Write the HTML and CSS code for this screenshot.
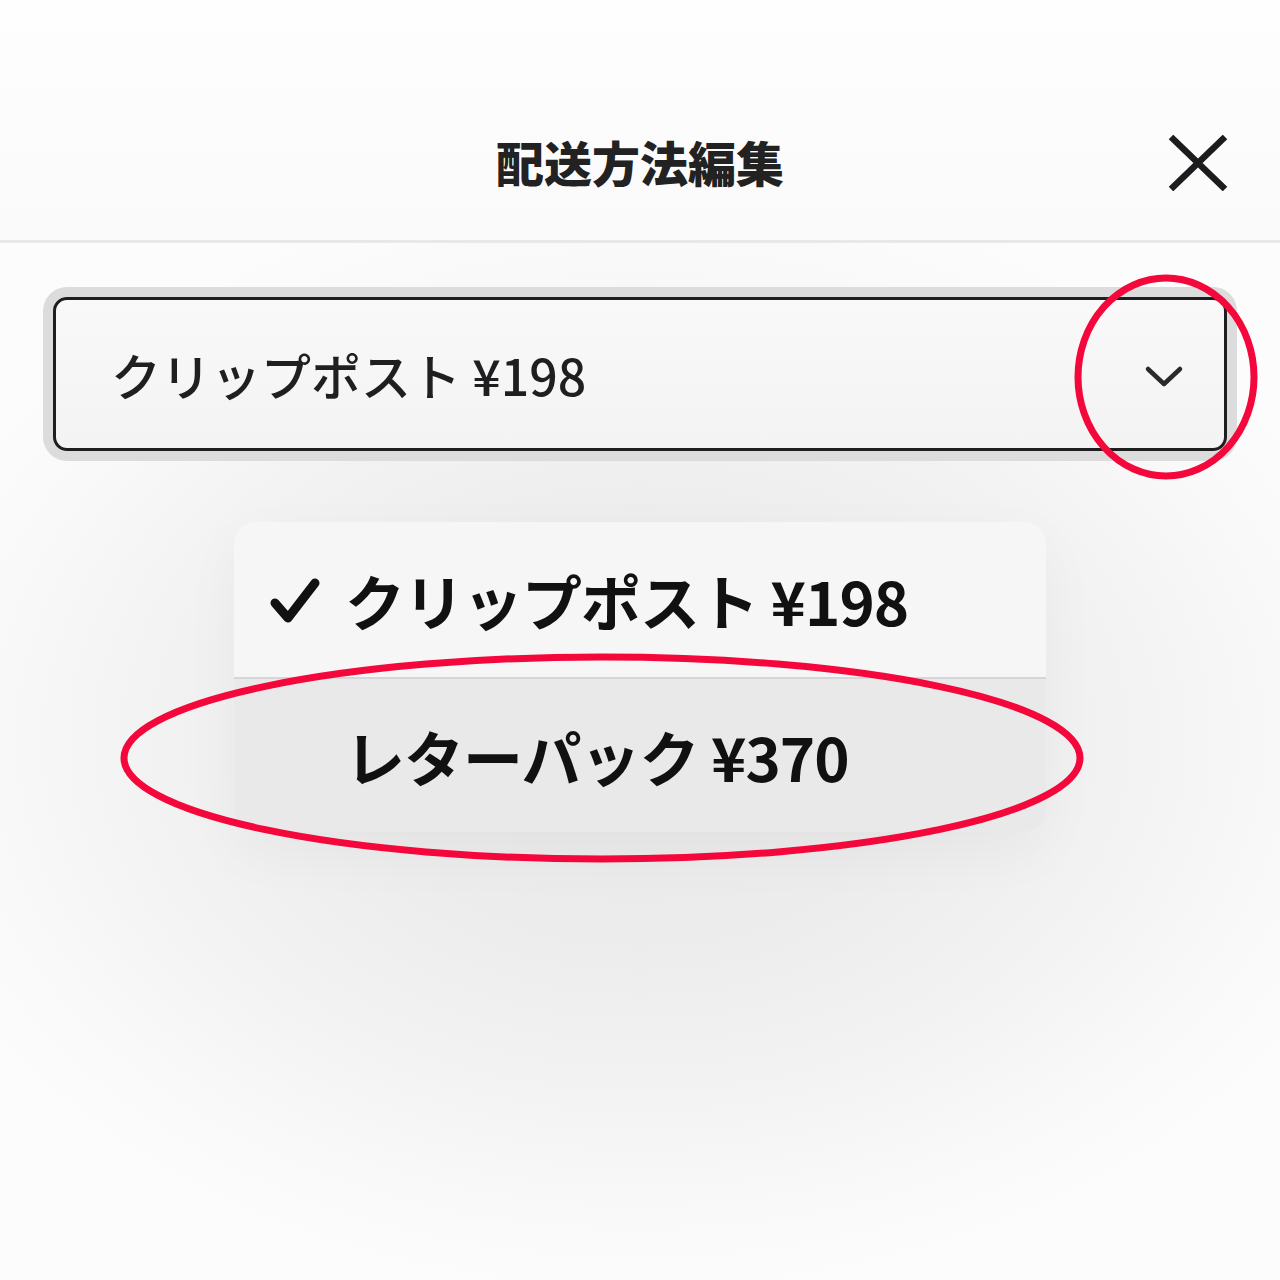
FILE: index.html
```html
<!DOCTYPE html>
<html lang="ja">
<head>
  <meta charset="UTF-8" />
  <meta name="viewport" content="width=device-width, initial-scale=1.0"/>
  <title>配送方法編集</title>
  <link rel="stylesheet" href="styles.css">
</head>
<body>
  <div class="sheet">
    <header class="sheet-header">
      <h1 class="sheet-title">配送方法編集</h1>
      <button class="close-btn" aria-label="閉じる">
        <svg viewBox="0 0 60 56" width="60" height="56">
          <path d="M3 2 L57 54 M57 2 L3 54" stroke="#1c1c1e" stroke-width="6.5" fill="none"/>
        </svg>
      </button>
    </header>

    <div class="field-section">
      <div class="select-box">
        <span class="select-value">クリップポスト ¥198</span>
        <svg class="select-chevron" viewBox="0 0 40 24" width="40" height="24">
          <path d="M4 5 L20 20 L36 5" stroke="#2a2a2c" stroke-width="4.5" fill="none" stroke-linecap="round" stroke-linejoin="round"/>
        </svg>
      </div>

      <ul class="menu">
        <li class="menu-item">
          <svg class="menu-check" viewBox="0 0 50 46" width="50" height="46">
            <path d="M5 25 L18 40 L45 5" stroke="#111" stroke-width="9" fill="none" stroke-linecap="round" stroke-linejoin="round"/>
          </svg>
          <span class="menu-label">クリップポスト ¥198</span>
        </li>
        <li class="menu-item is-active">
          <span class="menu-label">レターパック ¥370</span>
        </li>
      </ul>
    </div>
  </div>

  <!-- 注釈の赤丸 -->
  <svg class="marks" viewBox="0 0 1280 1280" width="1280" height="1280">
    <ellipse cx="1166" cy="377" rx="88" ry="99" stroke="#f4073b" stroke-width="7" fill="none"/>
    <ellipse cx="602" cy="758" rx="478" ry="101" stroke="#f4073b" stroke-width="7" fill="none"/>
  </svg>
</body>
</html>
```

FILE: styles.css
```css
* {
  margin: 0;
  padding: 0;
  box-sizing: border-box;
}

body {
  font-family: "Noto Sans CJK JP", "Noto Sans", sans-serif;
  background:
    radial-gradient(ellipse 780px 560px at 640px 740px, #e9e9e9 0%, #ececec 35%, #f3f3f3 65%, #f9f9f9 85%, #fcfcfc 100%);
  background-color: #fcfcfc;
  color: #1c1c1e;
  width: 1280px;
  height: 1280px;
  overflow: hidden;
  position: relative;
}

.sheet {
  width: 100%;
}

.sheet-header {
  height: 243px;
  display: flex;
  justify-content: center;
  align-items: flex-end;
  padding-bottom: 51px;
  border-bottom: 3px solid #e8e8eb;
  position: relative;
  background: linear-gradient(#fefefe, #fafafa);
}

.sheet-title {
  font-size: 48px;
  font-weight: 900;
  line-height: 56px;
  color: #222;
}

.close-btn {
  position: absolute;
  right: 52px;
  top: 135px;
  background: none;
  border: none;
  width: 60px;
  height: 56px;
}

.field-section {
  padding: 54px 53px 0;
}

.select-box {
  height: 154px;
  border: 3px solid #1e1e20;
  border-radius: 14px;
  box-shadow: 0 0 0 10px #dcdcdc;
  background: linear-gradient(#f9f9f9, #f3f3f3);
  display: flex;
  align-items: center;
  justify-content: space-between;
  padding: 0 40px 0 55px;
}

.select-value {
  font-size: 50px;
  font-weight: 500;
  color: #1f1f21;
}

.select-chevron {
  margin-top: 4px;
}

.menu {
  list-style: none;
  width: 812px;
  margin: 71px auto 0;
  border-radius: 22px;
  overflow: hidden;
  box-shadow: 0 20px 60px rgba(0, 0, 0, 0.04);
}

.menu-item {
  height: 155px;
  display: flex;
  align-items: center;
  padding-left: 111px;
  background: #f6f6f6;
  position: relative;
}

.menu-item + .menu-item {
  border-top: 2px solid #d6d6d8;
}

.menu-item.is-active {
  background: #e9e9ea;
}

.menu-check {
  position: absolute;
  left: 36px;
  top: 56px;
}

.menu-label {
  font-size: 60px;
  font-weight: 700;
  letter-spacing: -1px;
  color: #111;
}

.marks {
  position: absolute;
  top: 0;
  left: 0;
  pointer-events: none;
}
```
